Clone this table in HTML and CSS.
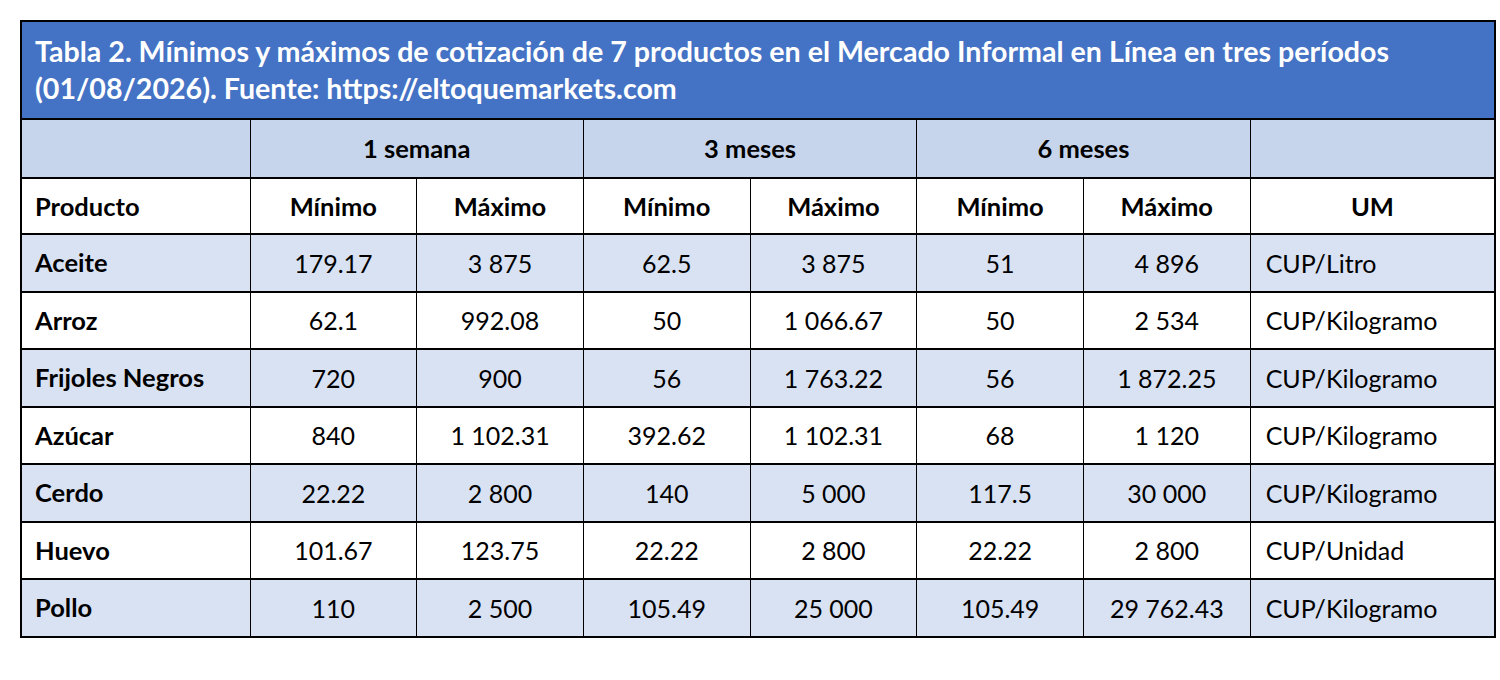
FILE: index.html
```html
<!DOCTYPE html>
<html lang="es">
<head>
<meta charset="utf-8">
<title>Tabla 2</title>
<link rel="stylesheet" href="styles.css">
</head>
<body>
<table class="tbl">
  <colgroup>
    <col class="c-prod">
    <col class="c-num"><col class="c-num"><col class="c-num"><col class="c-num"><col class="c-num"><col class="c-num">
    <col class="c-um">
  </colgroup>
  <thead>
    <tr class="title-row">
      <th colspan="8" class="title">Tabla 2. Mínimos y máximos de cotización de 7 productos en el Mercado Informal en Línea en tres períodos (01/08/2026). Fuente: https://eltoquemarkets.com</th>
    </tr>
    <tr class="group-row">
      <th></th>
      <th colspan="2">1 semana</th>
      <th colspan="2">3 meses</th>
      <th colspan="2">6 meses</th>
      <th></th>
    </tr>
    <tr class="head-row">
      <th class="left">Producto</th>
      <th>Mínimo</th><th>Máximo</th>
      <th>Mínimo</th><th>Máximo</th>
      <th>Mínimo</th><th>Máximo</th>
      <th>UM</th>
    </tr>
  </thead>
  <tbody>
    <tr class="alt"><th>Aceite</th><td>179.17</td><td>3 875</td><td>62.5</td><td>3 875</td><td>51</td><td>4 896</td><td class="um">CUP/Litro</td></tr>
    <tr><th>Arroz</th><td>62.1</td><td>992.08</td><td>50</td><td>1 066.67</td><td>50</td><td>2 534</td><td class="um">CUP/Kilogramo</td></tr>
    <tr class="alt"><th>Frijoles Negros</th><td>720</td><td>900</td><td>56</td><td>1 763.22</td><td>56</td><td>1 872.25</td><td class="um">CUP/Kilogramo</td></tr>
    <tr><th>Azúcar</th><td>840</td><td>1 102.31</td><td>392.62</td><td>1 102.31</td><td>68</td><td>1 120</td><td class="um">CUP/Kilogramo</td></tr>
    <tr class="alt"><th>Cerdo</th><td>22.22</td><td>2 800</td><td>140</td><td>5 000</td><td>117.5</td><td>30 000</td><td class="um">CUP/Kilogramo</td></tr>
    <tr><th>Huevo</th><td>101.67</td><td>123.75</td><td>22.22</td><td>2 800</td><td>22.22</td><td>2 800</td><td class="um">CUP/Unidad</td></tr>
    <tr class="alt"><th>Pollo</th><td>110</td><td>2 500</td><td>105.49</td><td>25 000</td><td>105.49</td><td>29 762.43</td><td class="um">CUP/Kilogramo</td></tr>
  </tbody>
</table>
</body>
</html>
```

FILE: styles.css
```css
html, body {
  margin: 0;
  padding: 0;
  background: #ffffff;
}

body {
  padding: 20px 0 0 20px;
  font-family: Lato, "Liberation Sans", sans-serif;
  color: #000000;
}

.tbl {
  border-collapse: collapse;
  table-layout: fixed;
  width: 1474px;
  border: 2px solid #000;
  font-size: 25px;
}

.c-prod { width: 229px; }
.c-num { width: 166.7px; }
.c-um { width: 245px; }

.tbl th,
.tbl td {
  border-top: 2px solid #000;
  border-bottom: 2px solid #000;
  border-left: 1.5px solid #000;
  border-right: 1.5px solid #000;
  padding: 0 13px;
  height: 55px;
  text-align: center;
  vertical-align: middle;
  font-weight: normal;
  line-height: 1.2;
  box-sizing: border-box;
  white-space: nowrap;
}

.tbl th {
  font-weight: bold;
  font-size: 25.5px;
}

.tbl .title {
  background: #4472c4;
  color: #ffffff;
  text-align: left;
  font-size: 28.6px;
  line-height: 37px;
  padding: 11px 13px 11px;
  height: 98px;
  white-space: normal;
}

.group-row th {
  background: #c7d5ec;
  height: 59px;
}

.head-row th {
  background: #ffffff;
  height: 56px;
}

.tbl .left,
.tbl tbody th {
  text-align: left;
}

.tbl tbody th,
.tbl tbody td {
  height: 57.5px;
}

.tbl tr.alt th,
.tbl tr.alt td {
  background: #d9e2f3;
}

.tbl td.um {
  text-align: left;
  padding-left: 15px;
}
```
